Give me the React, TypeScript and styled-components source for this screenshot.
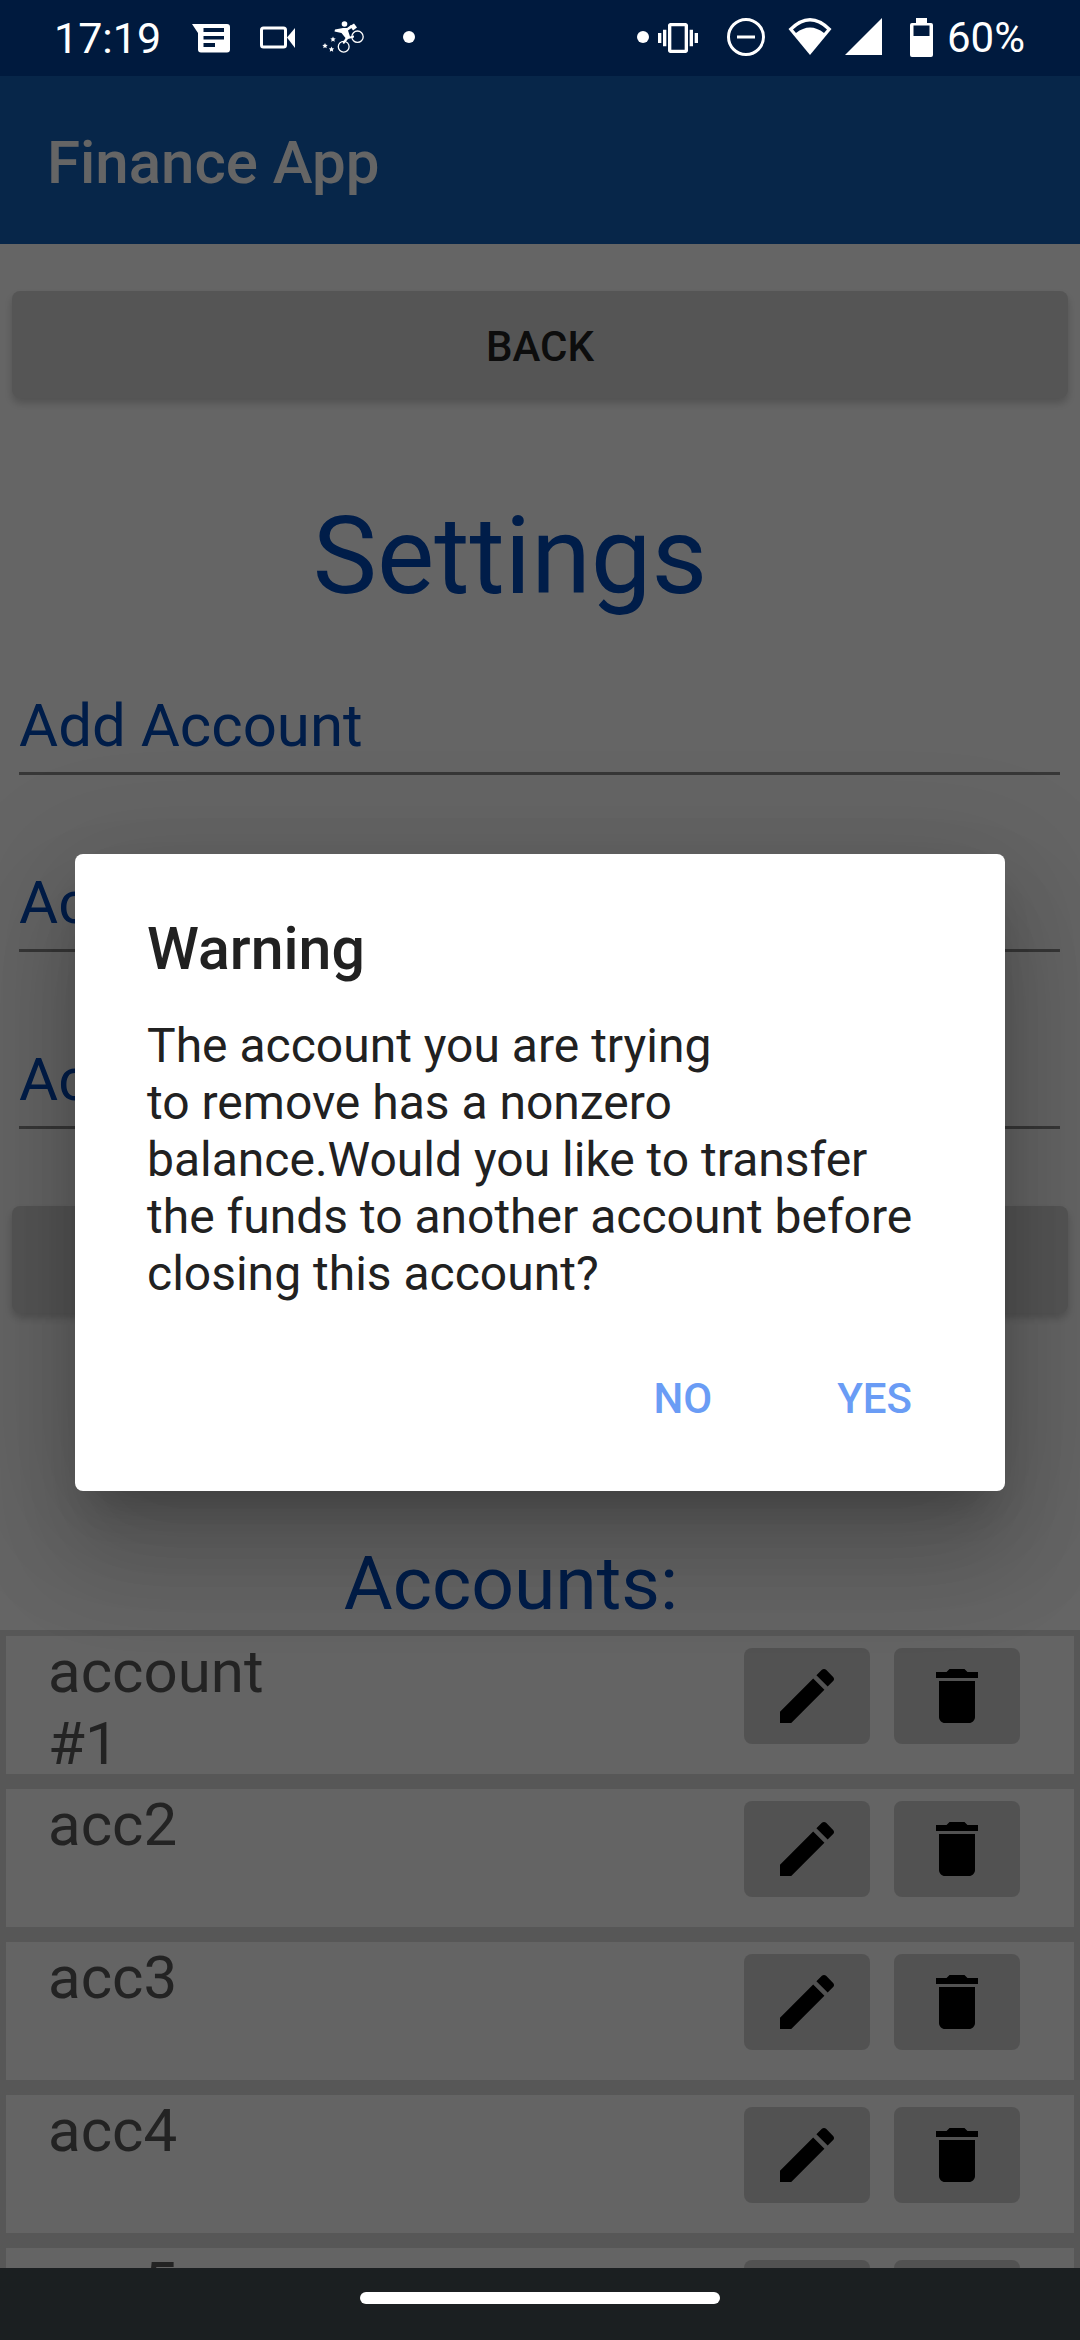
import styled, { createGlobalStyle } from "styled-components";

const GlobalStyle = createGlobalStyle`
    html, body {
        margin: 0;
        padding: 0;
        background: #000;
    }
    * {
        box-sizing: border-box;
    }
`;

const Screen = styled.div`
    display: flex;
    flex-direction: column;
    width: 1080px;
    height: 2340px;
    overflow: hidden;
    font-family: Roboto, "Liberation Sans", sans-serif;
`;

const StatusBar = styled.div`
    display: flex;
    flex: 0 0 76px;
    justify-content: space-between;
    padding: 18px 55px 0 54px;
    background-color: #001a3e;
    color: #ffffff;
`;

const StatusGroup = styled.div`
    display: flex;
    align-items: flex-start;
`;

const StatusText = styled.span<{ $ml?: number; $size: number }>`
    margin-left: ${(props) => props.$ml ?? 0}px;
    font-size: ${(props) => props.$size}px;
    line-height: 40px;
`;

const StatusIcon = styled.svg<{ $ml: number }>`
    flex: 0 0 auto;
    height: 40px;
    margin-left: ${(props) => props.$ml}px;
    fill: #ffffff;
`;

const Body = styled.div`
    position: relative;
    flex: 1 1 auto;
    min-height: 0;
    overflow: hidden;
    background-color: #ffffff;
`;

const AppBar = styled.div`
    display: flex;
    align-items: center;
    height: 168px;
    padding: 5px 0 0 47px;
    background-color: #1460b8;
    color: #ffffff;
    font-size: 60px;
    font-weight: 500;
`;

const Content = styled.div`
    display: flex;
    flex-direction: column;
`;

const RaisedButton = styled.div<{ $mt: number }>`
    display: flex;
    align-items: center;
    justify-content: center;
    height: 107px;
    margin: ${(props) => props.$mt}px 12px 0;
    padding-top: 4px;
    border-radius: 8px;
    background-color: #d6d6d6;
    box-shadow: 0 5px 8px rgba(0, 0, 0, 0.2);
    color: #222222;
    font-size: 42px;
    font-weight: 500;
`;

const PageTitle = styled.h1`
    margin: 94px 0 0;
    padding-right: 60px;
    color: #0049b8;
    font-size: 108px;
    font-weight: 400;
    line-height: 128px;
    text-align: center;
`;

const Field = styled.div<{ $mt: number }>`
    height: 90px;
    margin: ${(props) => props.$mt}px 20px 0 19px;
    border-bottom: 3px solid #8c8c8c;
    color: #0049b8;
    font-size: 60px;
    line-height: 82px;
`;

const SectionTitle = styled.h2`
    margin: 227px 0 0;
    padding-right: 58px;
    color: #0049b8;
    font-size: 75px;
    font-weight: 400;
    line-height: 86px;
    text-align: center;
`;

const AccountList = styled.div`
    display: flex;
    flex-direction: column;
    gap: 15px;
    margin-top: 4px;
    padding: 6px;
    background-color: #dcdcdc;
`;

const AccountRow = styled.div`
    display: flex;
    flex: 0 0 auto;
    justify-content: space-between;
    height: 138px;
    padding: 0 54px 0 42px;
    background-color: #fbfbfb;
`;

const AccountName = styled.div`
    width: 260px;
    color: #5a5a5a;
    font-size: 60px;
    line-height: 72px;
`;

const RowActions = styled.div`
    display: flex;
    gap: 24px;
    padding-top: 12px;
`;

const IconButton = styled.div`
    display: flex;
    align-items: center;
    justify-content: center;
    width: 126px;
    height: 96px;
    border-radius: 8px;
    background-color: #d0d0d0;
    > svg {
        width: 72px;
        height: 72px;
        fill: #000000;
    }
`;

const Scrim = styled.div`
    position: absolute;
    inset: 0;
    display: flex;
    align-items: center;
    justify-content: center;
    background-color: rgba(0, 0, 0, 0.605);
`;

const Dialog = styled.div`
    display: flex;
    flex-direction: column;
    width: 930px;
    height: 637px;
    padding: 0 93px 0 72px;
    border-radius: 8px;
    background-color: #ffffff;
    box-shadow: 0 29px 40px -18px rgba(0, 0, 0, 0.2), 0 63px 100px 8px rgba(0, 0, 0, 0.14),
        0 24px 120px 21px rgba(0, 0, 0, 0.12);
`;

const DialogTitle = styled.div`
    margin-top: 60px;
    color: #212121;
    font-size: 59px;
    font-weight: 500;
    line-height: 70px;
`;

const DialogText = styled.div`
    margin-top: 33px;
    color: #212121;
    font-size: 48px;
    line-height: 57px;
    white-space: pre;
`;

const DialogActions = styled.div`
    display: flex;
    justify-content: flex-end;
    gap: 125px;
    margin-top: 72px;
    color: #6a9cf5;
    font-size: 42px;
    font-weight: 500;
    line-height: 50px;
`;

const NavBar = styled.div`
    display: flex;
    flex: 0 0 72px;
    align-items: center;
    justify-content: center;
    padding-bottom: 12px;
    background-color: #1b1f21;
`;

const HomePill = styled.div`
    width: 360px;
    height: 12px;
    border-radius: 6px;
    background-color: #ffffff;
`;

function EditIcon() {
    return (
        <svg viewBox="0 0 24 24">
            <path d="M3 17.25V21h3.75L17.81 9.94l-3.75-3.75L3 17.25zM20.71 7.04c.39-.39.39-1.02 0-1.41l-2.34-2.34c-.39-.39-1.02-.39-1.41 0l-1.83 1.83 3.75 3.75 1.83-1.83z" />
        </svg>
    );
}

function DeleteIcon() {
    return (
        <svg viewBox="0 0 24 24">
            <path d="M6 19c0 1.1.9 2 2 2h8c1.1 0 2-.9 2-2V7H6v12zM19 4h-3.5l-1-1h-5l-1 1H5v2h14V4z" />
        </svg>
    );
}

const accounts = ["account #1", "acc2", "acc3", "acc4", "acc5"];

function App() {
    return (
        <Screen>
            <GlobalStyle />
            <StatusBar>
                <StatusGroup>
                    <StatusText $size={43}>17:19</StatusText>
                    <StatusIcon $ml={31} width="38" viewBox="0 0 38 40">
                        <path d="M0 6H35a3 3 0 0 1 3 3V31.500a3 3 0 0 1-3 3H9a3 3 0 0 1-3-3V15z" />
                        <path fill="#001a3e" d="M11.500 10H32V14H11.500zM11.500 18H32V21.500H11.500zM11.500 25H23V29H11.500z" />
                    </StatusIcon>
                    <StatusIcon $ml={30} width="35" viewBox="0 0 35 40">
                        <rect x="1.500" y="10" width="24" height="19" rx="2" fill="none" stroke="#ffffff" strokeWidth="3" />
                        <path d="M27 19.500L35 10V30z" />
                    </StatusIcon>
                    <StatusIcon $ml={27} width="42" viewBox="0 0 42 40">
                        <path d="M3 25l.8 1.800 1.900.2-1.400 1.300.4 1.900-1.700-1-1.700 1 .4-1.900L.300 27l1.900-.2zM11 18.500l.8 1.800 1.900.2-1.400 1.300.4 1.900-1.700-1-1.700 1 .4-1.900-1.400-1.300 1.900-.2zM9.500 28.500l.8 1.800 1.900.2-1.400 1.300.4 1.900-1.700-1-1.700 1 .4-1.900-1.400-1.300 1.900-.2z" />
                        <circle cx="22.500" cy="6" r="2.800" />
                        <path d="M13 11.500l8-1.500h4l4-3 2 2-5 3.500 2 6 4-1v2l-6 1.500-4 5-1.500-1 3-5-4-5-7-1.500z" />
                        <path d="M28 8l4-2.500 3 4-4 3z" />
                        <circle cx="21.700" cy="28.700" r="5.400" fill="none" stroke="#ffffff" strokeWidth="1.300" />
                        <circle cx="35.500" cy="18.700" r="5.700" fill="none" stroke="#ffffff" strokeWidth="1.300" />
                    </StatusIcon>
                    <StatusIcon $ml={39} width="12" viewBox="0 0 12 40">
                        <circle cx="6" cy="19" r="6" />
                    </StatusIcon>
                </StatusGroup>
                <StatusGroup>
                    <StatusIcon $ml={0} width="12" viewBox="0 0 12 40">
                        <circle cx="6" cy="19" r="6" />
                    </StatusIcon>
                    <StatusIcon $ml={8} width="42" viewBox="0 0 24 24">
                        <path d="M0 15h2V9H0v6zm3 2h2V7H3v10zm19-8v6h2V9h-2zm-3 8h2V7h-2v10zM16.500 3h-9C6.670 3 6 3.670 6 4.500v15c0 .83.67 1.500 1.500 1.500h9c.83 0 1.500-.67 1.500-1.500v-15c0-.83-.67-1.500-1.500-1.500zM16 19H8V5h8v14z" />
                    </StatusIcon>
                    <StatusIcon $ml={28} width="38" viewBox="0 0 38 40">
                        <circle cx="19" cy="19" r="17.500" fill="none" stroke="#ffffff" strokeWidth="3" />
                        <path d="M10 17.500H28V20.500H10z" />
                    </StatusIcon>
                    <StatusIcon $ml={23} width="44" viewBox="0 0 44 40">
                        <path d="M22 37L.5 11Q22-11 43.500 11z" />
                        <path fill="#001a3e" d="M5 11.500Q22-4.500 39 11.500L36 15Q22 4 8 15z" />
                    </StatusIcon>
                    <StatusIcon $ml={13} width="37" viewBox="0 0 37 40">
                        <path d="M37 0V37H0z" />
                    </StatusIcon>
                    <StatusIcon $ml={28} width="23" viewBox="0 0 23 40">
                        <path d="M6 0H17V5H21a2 2 0 0 1 2 2V37a2 2 0 0 1-2 2H2a2 2 0 0 1-2-2V7a2 2 0 0 1 2-2H6z" />
                        <path fill="#001a3e" d="M3.500 7.500H19.500V18H3.500z" />
                    </StatusIcon>
                    <StatusText $ml={14} $size={42}>60%</StatusText>
                </StatusGroup>
            </StatusBar>
            <Body>
                <AppBar>Finance App</AppBar>
                <Content>
                    <RaisedButton $mt={47}>BACK</RaisedButton>
                    <PageTitle>Settings</PageTitle>
                    <Field $mt={65}>Add Account</Field>
                    <Field $mt={87}>Ac</Field>
                    <Field $mt={87}>Ac</Field>
                    <RaisedButton $mt={77} />
                    <SectionTitle>Accounts:</SectionTitle>
                    <AccountList>
                        {accounts.map((name) => (
                            <AccountRow key={name}>
                                <AccountName>{name}</AccountName>
                                <RowActions>
                                    <IconButton>
                                        <EditIcon />
                                    </IconButton>
                                    <IconButton>
                                        <DeleteIcon />
                                    </IconButton>
                                </RowActions>
                            </AccountRow>
                        ))}
                    </AccountList>
                </Content>
                <Scrim>
                    <Dialog>
                        <DialogTitle>Warning</DialogTitle>
                        <DialogText>
                            {"The account you are trying\nto remove has a nonzero\nbalance.Would you like to transfer\nthe funds to another account before\nclosing this account?"}
                        </DialogText>
                        <DialogActions>
                            <span>NO</span>
                            <span>YES</span>
                        </DialogActions>
                    </Dialog>
                </Scrim>
            </Body>
            <NavBar>
                <HomePill />
            </NavBar>
        </Screen>
    );
}

export default App;
